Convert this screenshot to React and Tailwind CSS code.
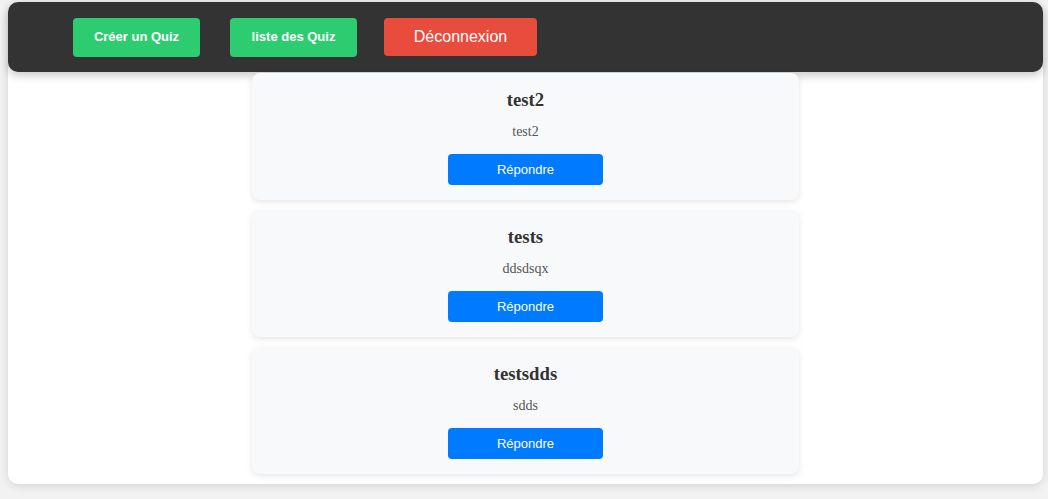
import React from "react";

const quizzes = [
  { title: "test2", desc: "test2" },
  { title: "tests", desc: "ddsdsqx" },
  { title: "testsdds", desc: "sdds" },
];

export default function App() {
  return (
    <div className="w-[1048px] h-[499px] bg-[#f2f2f2] pt-[2px] pl-[8px] pr-[5px] overflow-hidden" style={{ fontFamily: '"Liberation Sans", Arial, sans-serif' }}>
      <div className="bg-white rounded-[10px] shadow-[0_2px_10px_rgba(0,0,0,0.12)] pb-[10px]">
        <nav className="h-[70px] bg-[#333333] rounded-[10px] shadow-[0_4px_8px_rgba(0,0,0,0.2)] flex items-center pl-[65px]">
          <button className="w-[127px] h-[39px] bg-[#2ecc71] text-white text-[13px] font-bold rounded-[4px]">Créer un Quiz</button>
          <button className="ml-[30px] w-[127px] h-[39px] bg-[#2ecc71] text-white text-[13px] font-bold rounded-[4px]">liste des Quiz</button>
          <button className="ml-[27px] w-[153px] h-[38px] bg-[#e74c3c] text-white text-[16px] rounded-[4px]">Déconnexion</button>
        </nav>
        <div className="flex flex-col items-center gap-[10px] mt-[1px]">
          {quizzes.map((q) => (
            <div key={q.title} className="w-[547px] h-[127px] bg-[#f8f9fa] rounded-[8px] shadow-[0_2px_6px_rgba(0,0,0,0.1)] flex flex-col items-center pt-[16px]">
              <h3 className="text-[18.72px] leading-[22px] font-bold text-[#333333]" style={{ fontFamily: '"Liberation Serif", "Times New Roman", serif' }}>{q.title}</h3>
              <p className="mt-[13px] text-[14px] leading-[16px] text-[#555555]" style={{ fontFamily: '"Liberation Serif", "Times New Roman", serif' }}>{q.desc}</p>
              <button className="mt-[14px] w-[155px] h-[31px] bg-[#007bff] text-white text-[13px] rounded-[4px]">Répondre</button>
            </div>
          ))}
        </div>
      </div>
    </div>
  );
}
